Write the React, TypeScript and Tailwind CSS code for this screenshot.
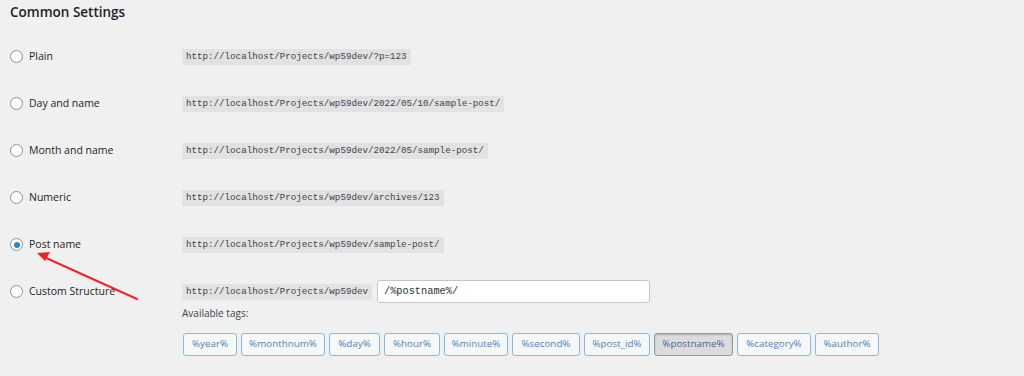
import React from "react";

const rows = [
  { label: "Plain", url: "http://localhost/Projects/wp59dev/?p=123" },
  { label: "Day and name", url: "http://localhost/Projects/wp59dev/2022/05/10/sample-post/" },
  { label: "Month and name", url: "http://localhost/Projects/wp59dev/2022/05/sample-post/" },
  { label: "Numeric", url: "http://localhost/Projects/wp59dev/archives/123" },
  { label: "Post name", url: "http://localhost/Projects/wp59dev/sample-post/", checked: true },
];

const tags: { t: string; w: string; active?: boolean }[] = [
  { t: "%year%", w: "w-[54px]" },
  { t: "%monthnum%", w: "w-[84px]" },
  { t: "%day%", w: "w-[51px]" },
  { t: "%hour%", w: "w-[56px]" },
  { t: "%minute%", w: "w-[64px]" },
  { t: "%second%", w: "w-[68px]" },
  { t: "%post_id%", w: "w-[66px]" },
  { t: "%postname%", w: "w-[79px]", active: true },
  { t: "%category%", w: "w-[74px]" },
  { t: "%author%", w: "w-[64px]" },
];

function Radio({ checked }: { checked?: boolean }) {
  return (
    <span className="flex h-[13px] w-[13px] items-center justify-center rounded-full border border-[#8c8f94] bg-white">
      {checked && <span className="h-[6px] w-[6px] rounded-full bg-[#3582c4]" />}
    </span>
  );
}

function Code({ children }: { children: React.ReactNode }) {
  return (
    <code
      className="bg-[#e2e2e3] px-[4px] text-[9.2px] leading-[16px] text-[#3c434a]"
      style={{ fontFamily: '"Liberation Mono", "DejaVu Sans Mono", monospace' }}
    >
      {children}
    </code>
  );
}

export default function App() {
  return (
    <div
      className="relative h-[376px] w-[1024px] overflow-hidden bg-[#f0f0f1] text-[#1d2327]"
      style={{ fontFamily: '"Open Sans", "Noto Sans", sans-serif' }}
    >
      <div className="pl-[10px] pt-[2px]">
        <div className="h-[31px] text-[13.5px] font-semibold leading-[20px]">Common Settings</div>
        {rows.map((r) => (
          <div key={r.label} className="flex h-[47px] items-center">
            <div className="flex w-[172px] items-center gap-[6px]">
              <Radio checked={r.checked} />
              <span className="text-[10.5px] font-medium">{r.label}</span>
            </div>
            <Code>{r.url}</Code>
          </div>
        ))}
        <div className="flex pt-[12px]">
          <div className="flex h-[23px] w-[172px] items-center gap-[6px]">
            <Radio />
            <span className="text-[10.5px] font-medium">Custom Structure</span>
          </div>
          <div className="flex flex-col">
            <div className="flex items-center gap-[5px]">
              <Code>http://localhost/Projects/wp59dev</Code>
              <div
                className="flex h-[23px] w-[273px] items-center rounded-[3px] border border-[#c3c4c7] bg-white px-[6px] text-[10.3px] text-[#2c3338]"
                style={{ fontFamily: '"Liberation Mono", "DejaVu Sans Mono", monospace' }}
              >
                /%postname%/
              </div>
            </div>
            <div className="mt-[2px] text-[10px] leading-[16px] text-[#3c434a]">Available tags:</div>
            <div className="mt-[12px] flex gap-[4px] pl-[1px]">
              {tags.map((tg) =>
                tg.active ? (
                  <span
                    key={tg.t}
                    className={`${tg.w} flex h-[23px] items-center justify-center rounded-[3px] border border-[#8a9aab] bg-[#dcdcde] text-[9.8px] text-[#3d6a93] shadow-[inset_0_1px_2px_rgba(0,0,0,0.2)]`}
                  >
                    {tg.t}
                  </span>
                ) : (
                  <span
                    key={tg.t}
                    className={`${tg.w} flex h-[23px] items-center justify-center rounded-[3px] border border-[#8bb8e0] bg-[#f6f7f7] text-[9.8px] text-[#4a86bf]`}
                  >
                    {tg.t}
                  </span>
                )
              )}
            </div>
          </div>
        </div>
      </div>
      <svg className="pointer-events-none absolute left-0 top-0" width="1024" height="376">
        <line x1="137" y1="299" x2="44" y2="257" stroke="#f02424" strokeWidth="2" strokeLinecap="round" />
        <polygon points="37,253 50,252 45,261" fill="#f02424" />
      </svg>
    </div>
  );
}
